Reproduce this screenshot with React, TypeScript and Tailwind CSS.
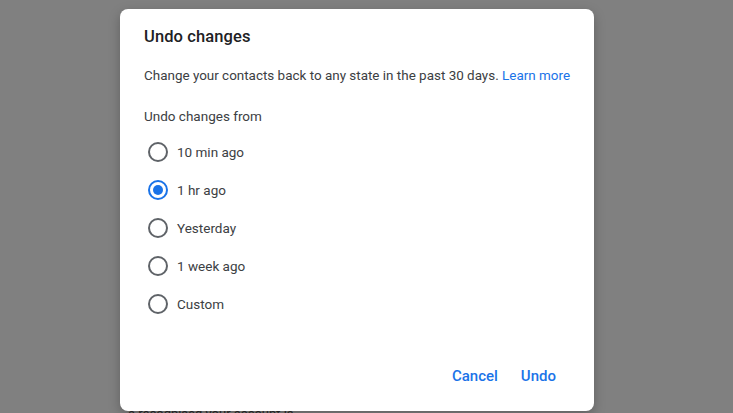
import { useState } from "react";

const options = ["10 min ago", "1 hr ago", "Yesterday", "1 week ago", "Custom"];

function Radio({ checked }: { checked: boolean }) {
  return (
    <span
      className={`flex h-[20px] w-[20px] items-center justify-center rounded-full border-2 ${
        checked ? "border-[#1a73e8]" : "border-[#5f6368]"
      }`}
    >
      {checked && <span className="h-[10px] w-[10px] rounded-full bg-[#1a73e8]" />}
    </span>
  );
}

export default function App() {
  const [selected, setSelected] = useState(1);

  return (
    <div
      className="relative h-[413px] w-[733px] overflow-hidden bg-[#808080]"
      style={{ fontFamily: "Roboto, 'Liberation Sans', sans-serif" }}
    >
      {/* page text peeking out below the dialog */}
      <div className="absolute left-[128px] top-[404px] text-[13px] text-[#2a2a2a]">
        a recognised your account is
      </div>

      <div className="relative ml-[120px] mt-[9px] flex h-[402px] w-[474px] flex-col rounded-[8px] bg-white px-[24px] shadow-[0_4px_12px_rgba(0,0,0,0.25)]">
        <h2 className="mt-[18px] text-[16.5px] font-medium leading-[20px] tracking-[0.1px] text-[#202124]">
          Undo changes
        </h2>
        <p className="mt-[19px] whitespace-nowrap text-[13.45px] leading-[20px] text-[#3c4043]">
          Change your contacts back to any state in the past 30 days.{" "}
          <a className="text-[#1a73e8]">Learn more</a>
        </p>
        <p className="mt-[20px] text-[13.5px] leading-[20px] text-[#3c4043]">Undo changes from</p>

        <div className="mt-[7px] flex flex-col">
          {options.map((o, i) => (
            <label
              key={o}
              onClick={() => setSelected(i)}
              className="flex h-[38px] cursor-pointer items-center gap-[9px] pl-[4px]"
            >
              <Radio checked={selected === i} />
              <span className="text-[13.5px] text-[#3c4043]">{o}</span>
            </label>
          ))}
        </div>

        <div className="mt-auto mb-[17px] flex justify-end gap-[1px]">
          <button className="h-[36px] px-[8px] text-[15px] font-medium text-[#1a73e8]">Cancel</button>
          <button className="h-[36px] px-[14px] text-[15px] font-medium text-[#1a73e8]">Undo</button>
        </div>
      </div>
    </div>
  );
}
